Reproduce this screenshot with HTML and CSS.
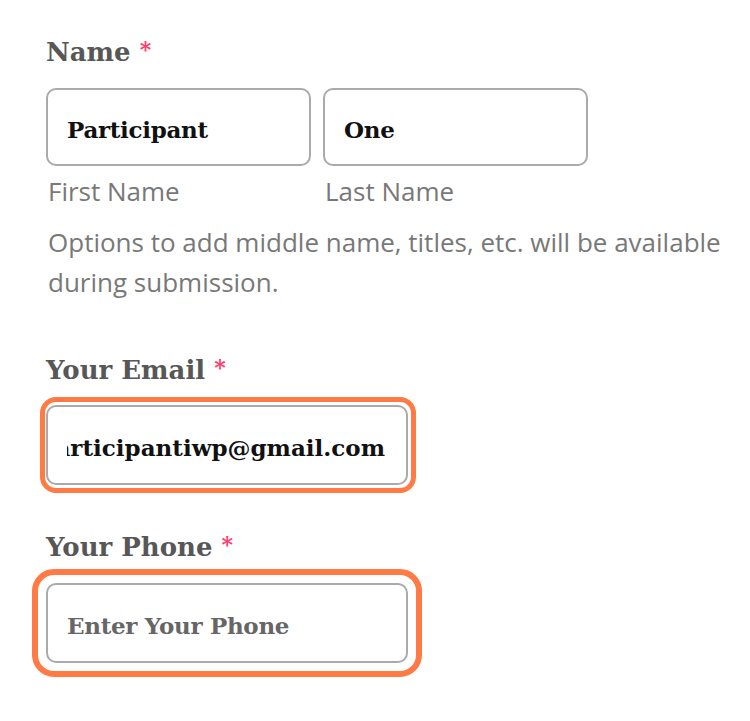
FILE: index.html
```html
<!DOCTYPE html>
<html lang="en">
<head>
<meta charset="utf-8">
<title>Form</title>
<link rel="stylesheet" href="styles.css">
</head>
<body>
<form class="form">
  <div class="field field-name">
    <div class="label">Name <span class="req">*</span></div>
    <div class="name-row">
      <div class="name-col">
        <div class="input"><span class="value">Participant</span></div>
        <div class="sublabel">First Name</div>
      </div>
      <div class="name-col">
        <div class="input"><span class="value">One</span></div>
        <div class="sublabel">Last Name</div>
      </div>
    </div>
    <div class="help">Options to add middle name, titles, etc. will be available during submission.</div>
  </div>

  <div class="field field-email">
    <div class="label">Your Email <span class="req">*</span></div>
    <div class="ring ring-tight">
      <div class="input input-wide"><div class="clip"><span class="value value-email">participantiwp@gmail.com</span></div></div>
    </div>
  </div>

  <div class="field field-phone">
    <div class="label">Your Phone <span class="req">*</span></div>
    <div class="ring ring-wide">
      <div class="input input-wide"><span class="placeholder">Enter Your Phone</span></div>
    </div>
  </div>
</form>
</body>
</html>
```

FILE: styles.css
```css
html, body {
  margin: 0;
  padding: 0;
  background: #ffffff;
}

.form {
  padding: 36px 0 0 46px;
  width: 704px;
  box-sizing: border-box;
}

.label {
  font-family: "DejaVu Serif", serif;
  font-weight: bold;
  font-size: 26px;
  line-height: 32px;
  height: 32px;
  color: #575757;
}

.req {
  color: #ff3b6b;
  font-size: 22px;
  line-height: 0;
  vertical-align: 4px;
}

.name-row {
  display: grid;
  grid-template-columns: 265px 265px;
  column-gap: 12px;
  margin-top: 20px;
}

.input {
  box-sizing: border-box;
  height: 78px;
  border: 2px solid #aaaaaa;
  border-radius: 10px;
  padding: 4px 20px 0 19px;
  display: flex;
  align-items: center;
  overflow: hidden;
  background: #ffffff;
  font-family: "DejaVu Serif", serif;
  font-weight: bold;
  font-size: 23px;
  letter-spacing: -0.3px;
  white-space: nowrap;
}

.value {
  color: #111111;
}

.placeholder {
  color: #666666;
}

.input-wide {
  width: 362px;
  height: 80px;
}

.clip {
  flex: 1;
  min-width: 0;
  overflow: hidden;
  display: flex;
  justify-content: flex-end;
  margin-right: 1px;
}

.value-email {
  letter-spacing: 0;
}

.sublabel {
  margin-top: 5px;
  font-family: "Open Sans", sans-serif;
  font-size: 26px;
  line-height: 40px;
  color: #787878;
  padding-left: 2px;
}

.help {
  margin-top: 11px;
  font-family: "Open Sans", sans-serif;
  font-size: 26px;
  line-height: 40px;
  color: #787878;
  padding-left: 2px;
  width: 690px;
}

.field-email {
  margin-top: 52px;
}

.field-phone {
  margin-top: 38px;
}

.ring {
  border: 5px solid #ff7a45;
  display: inline-block;
  vertical-align: top;
  background: #ffffff;
}

.ring-tight {
  margin-top: 11px;
  border-radius: 16px;
  padding: 3px 3px 3px 1px;
  margin-left: -6px;
}

.ring-wide {
  margin-top: 6px;
  border-width: 6px;
  border-radius: 22px;
  padding: 8px;
  margin-left: -14px;
}
```
